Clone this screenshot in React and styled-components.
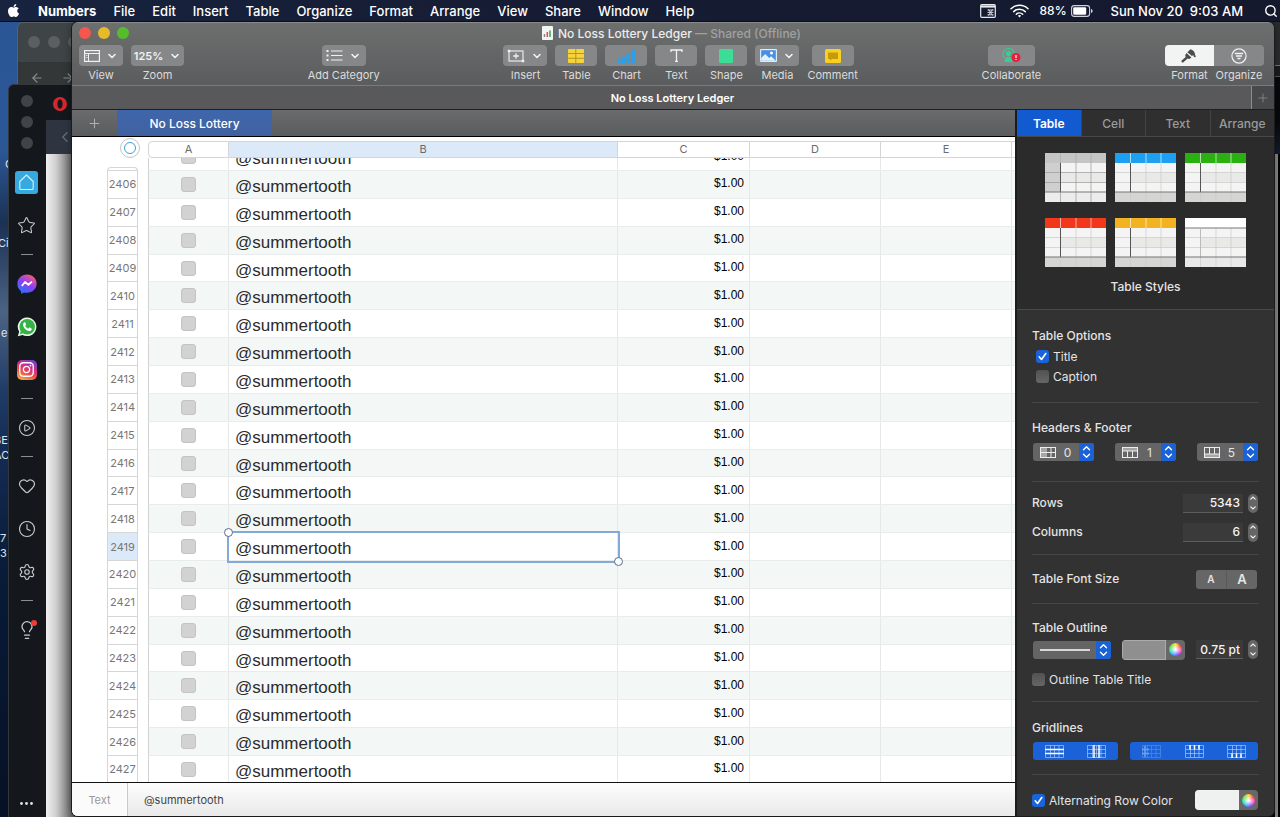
import React, { useState } from "react";
import styled, { createGlobalStyle, css } from "styled-components";
import { FaApple, FaInstagram } from "react-icons/fa";
import {
  ArrowLeft,
  ArrowRight,
  ChevronDown,
  ChevronLeft,
  CirclePlay,
  Clock,
  Heart,
  Lightbulb,
  Plus,
  Search,
  Settings,
  Star,
} from "lucide-react";

const GlobalStyle = createGlobalStyle`
  * {
    box-sizing: border-box;
  }
  body {
    margin: 0;
    overflow: hidden;
    font-family: Inter, "Liberation Sans", sans-serif;
    font-size: 12px;
    color: #e4e4e4;
  }
  button, input, select {
    margin: 0;
    padding: 0;
    border: 0;
    background: none;
    color: inherit;
    font: inherit;
  }
  svg {
    display: block;
    flex: none;
  }
`;

const Screen = styled.div`
  display: flex;
  flex-direction: column;
  height: 100vh;
`;

/* ---------- menu bar ---------- */

const MenuBar = styled.header`
  display: flex;
  justify-content: space-between;
  align-items: center;
  height: 22px;
  flex: none;
  padding: 0 2px 0 6px;
  background: linear-gradient(90deg, #17233f, #161c33 40%, #14192e);
  border-bottom: 1px solid #0a0d16;
  color: #fff;
  font-size: 13px;
  font-weight: 500;
  white-space: nowrap;
`;

const MenuList = styled.nav`
  display: flex;
  align-items: center;
  gap: 17px;
`;

const MenuItem = styled.button`
  font-weight: ${({ $bold }) => ($bold ? 700 : 500)};
`;

const StatusList = styled.div`
  display: flex;
  align-items: center;
`;

const StatusItem = styled.div`
  display: flex;
  align-items: center;
  gap: 4px;
  margin-left: ${({ $gap }) => $gap}px;
  font-size: ${({ $small }) => ($small ? 12 : 13)}px;
`;

/* ---------- desktop and the windows behind ---------- */

const Desktop = styled.div`
  position: relative;
  flex: 1;
  overflow: hidden;
  background: linear-gradient(
    180deg,
    #2a5695 0,
    #2b5795 130px,
    #1b3154 200px,
    #4b6384 290px,
    #1f3b66 370px,
    #142b52 430px,
    #081a36 560px,
    #071125 100%
  );
`;

const FileLabel = styled.span`
  position: absolute;
  left: ${({ $x }) => $x}px;
  top: ${({ $y }) => $y}px;
  color: #dfe5ee;
  font-size: 11px;
  line-height: 14px;
`;

const RightEdge = styled.div`
  position: absolute;
  top: 0;
  right: 0;
  bottom: 0;
  width: 20px;
  background: linear-gradient(#2a2c2e 0 43px, #77797b 43px 44px, #1b1c1e 44px 54px, #55585b 54px 55px, #07090d 55px 100px, #101d33 132px, #020203 132px);

  &::after {
    content: "";
    position: absolute;
    top: 132px;
    right: 2px;
    bottom: 0;
    width: 3px;
    background: #858585;
  }
`;

const BackWindow = styled.div`
  position: absolute;
  left: 17px;
  top: 0;
  width: 300px;
  height: 200px;
  border: 1px solid #5b6062;
  border-radius: 6px 6px 0 0;
  background: linear-gradient(#3f4446 0 39px, #333738 39px);
  color: #8a8d8e;
`;

const BackDots = styled.div`
  display: flex;
  gap: 8px;
  padding: 13px 10px;
`;

const BackNav = styled.div`
  display: flex;
  gap: 17px;
  padding: 10px 12px;
`;

const GreyDot = styled.i`
  width: 12px;
  height: 12px;
  border-radius: 50%;
  background: ${({ $dark }) => ($dark ? "#404347" : "#5b5f61")};
`;

const OperaWindow = styled.div`
  position: absolute;
  left: 8px;
  top: 62px;
  bottom: 0;
  width: 300px;
  display: flex;
  border: 1px solid #33383c;
  border-bottom: 0;
  border-radius: 6px 0 0 0;
  background: #14181c;
  overflow: hidden;
`;

const OperaSidebar = styled.nav`
  display: flex;
  flex-direction: column;
  align-items: center;
  width: 37px;
  padding: 6px 2px 5px 0;
  color: #c9ccd0;
`;

const SideDots = styled.div`
  display: flex;
  flex-direction: column;
  gap: 9px;
  padding: 4px 0 12px;
`;

const SideButton = styled.button`
  position: relative;
  display: flex;
  align-items: center;
  justify-content: center;
  width: 35px;
  height: ${({ $last }) => ($last ? 18 : 43)}px;
  margin-top: ${({ $last }) => ($last ? "auto" : 0)};
`;

const SideRule = styled.i`
  width: 12px;
  height: 1px;
  margin: 7px 0;
  background: #8b8f94;
`;

const HomeTile = styled.span`
  display: flex;
  align-items: center;
  justify-content: center;
  width: 23px;
  height: 23px;
  border-radius: 3px;
  background: #37a9e1;
`;

const InstaTile = styled.span`
  display: flex;
  align-items: center;
  justify-content: center;
  width: 20px;
  height: 20px;
  border-radius: 5px;
  color: #fff;
  background: linear-gradient(25deg, #f9b343 5%, #ee4a4e 40%, #c72d93 65%, #5b4ad8 100%);
`;

const Notice = styled.i`
  position: absolute;
  top: 12px;
  right: 7px;
  width: 6px;
  height: 6px;
  border-radius: 50%;
  background: #f03a36;
`;

const OperaMain = styled.div`
  display: flex;
  flex-direction: column;
  flex: 1;
`;

const OperaTabs = styled.div`
  height: 35px;
  padding: 12px 7px;
`;

const OperaBar = styled.div`
  height: 34px;
  padding: 8px 10px;
  background: #2e3541;
  color: #69717d;
`;

const OperaPage = styled.div`
  flex: 1;
  background: linear-gradient(90deg, #f0f0f0 0, #cfcfcf 10px, #8d8d8d 20px, #5c5c5c 27px);
`;

/* ---------- Numbers window ---------- */

const Window = styled.main`
  position: absolute;
  left: 72px;
  right: 6px;
  top: 0;
  bottom: 1px;
  display: flex;
  flex-direction: column;
  border-radius: 6px;
  overflow: hidden;
  background: #323232;
  box-shadow: 0 0 0 1px #1b1b1b, 0 0 10px rgba(0, 0, 0, 0.4);
`;

const Chrome = styled.div`
  flex: none;
  height: 64px;
  padding: 0 10px 0 7px;
  background: linear-gradient(#6d6f6f, #5b5c5d);
  border-top: 1px solid #8a8b8b;
  border-bottom: 1px solid #7a7b7b;
`;

const TitleBar = styled.div`
  display: grid;
  grid-template-columns: 1fr auto 1fr;
  align-items: center;
  height: 20px;
`;

const Lights = styled.div`
  display: flex;
  gap: 7px;
`;

const Light = styled.button`
  width: 12px;
  height: 12px;
  border-radius: 50%;
  background: ${({ $color }) => $color};
`;

const Title = styled.h1`
  display: flex;
  align-items: center;
  gap: 5px;
  margin: 0;
  font-size: 12px;
  font-weight: 500;
  color: #ececec;

  span {
    color: #a0a1a1;
  }
`;

const Toolbar = styled.div`
  display: flex;
  justify-content: space-between;
  padding-top: 2px;
`;

const ToolGroup = styled.div`
  display: flex;
  gap: ${({ $gap }) => $gap || 0}px;
`;

const ToolItem = styled.div`
  display: flex;
  flex-direction: column;
  align-items: center;
  min-width: ${({ $width }) => $width}px;
`;

const ToolButton = styled.button`
  display: flex;
  align-items: center;
  justify-content: center;
  gap: 6px;
  width: ${({ $width }) => $width}px;
  height: 21px;
  border-radius: ${({ $side }) =>
    $side === "left" ? "4px 0 0 4px" : $side === "right" ? "0 4px 4px 0" : "4px"};
  background: ${({ $active }) => ($active ? "#f2f3f3" : "#868788")};
  color: ${({ $active }) => ($active ? "#4a4a4a" : "#f2f2f2")};
  font-size: 11px;
  font-weight: 600;
`;

const ToolLabel = styled.span`
  margin-top: 2px;
  font-size: 11px;
  line-height: 14px;
  color: #dcdcdc;
  white-space: nowrap;
`;

const DocTabs = styled.div`
  display: flex;
  flex: none;
  height: 24px;
  background: #59595b;
  border-bottom: 1px solid #1e1e1e;
`;

const DocTab = styled.button`
  flex: 1;
  padding-left: 22px;
  border-right: 1px solid #8d8d8d;
  color: #fff;
  font-size: 11px;
  font-weight: 600;
`;

const AddTab = styled.button`
  display: flex;
  align-items: center;
  justify-content: center;
  width: ${({ $width }) => $width}px;
  color: ${({ $dim }) => ($dim ? "#858585" : "#b5b5b5")};
  background: ${({ $dim }) => ($dim ? "#48494a" : "transparent")};
`;

const Workspace = styled.div`
  display: flex;
  flex: 1;
  min-height: 0;
`;

const Document = styled.section`
  display: flex;
  flex-direction: column;
  flex: 1;
  min-width: 0;
  border-right: 2px solid #1c1c1c;
  background: #fff;
`;

const SheetTabs = styled.div`
  display: flex;
  flex: none;
  height: 27px;
  background: linear-gradient(#6a6b6c, #5b5c5d);
  border-bottom: 1px solid #000;
`;

const SheetTab = styled.button`
  width: 155px;
  background: linear-gradient(#3f66ab, #4061a0);
  color: #fff;
  font-weight: 500;
`;

/* ---------- spreadsheet ---------- */

const Canvas = styled.div`
  display: flex;
  flex: 1;
  min-height: 0;
  padding-left: 35px;
  overflow: hidden;
`;

const Sheet = styled.table`
  display: flex;
  flex-direction: column;
  flex: 1;
  margin-bottom: -2px;
  color: #111;
`;

const rowColumns = css`
  display: grid;
  grid-template-columns: 31px 10px 81px 389px 132px 131px 131px 1fr;
`;

const SheetHead = styled.thead`
  display: block;
`;

const HeadRow = styled.tr`
  ${rowColumns}
  position: relative;
  z-index: 1;
  height: 21px;
  background: #fff;
`;

const ColHead = styled.th`
  height: 17px;
  margin-top: 4px;
  padding: 0;
  border: solid #d5d5d5;
  border-width: 1px 1px 1px ${({ $first }) => ($first ? 1 : 0)}px;
  border-radius: ${({ $first }) => ($first ? "4px 0 0 4px" : 0)};
  background: ${({ $on }) => ($on ? "#dce9f9" : "#fff")};
  color: #6b6b6b;
  font-size: 11px;
  font-weight: 400;
  line-height: 15px;
`;

const Corner = styled.td`
  display: flex;
  justify-content: flex-end;
  align-items: flex-end;
  padding: 0;
`;

const TableHandle = styled.button`
  display: flex;
  align-items: center;
  justify-content: center;
  width: 20px;
  height: 20px;
  margin-right: -2px;
  flex: none;
  border: 1px solid #c4c4c4;
  border-radius: 50%;

  &::after {
    content: "";
    width: 10px;
    height: 10px;
    border: 1px solid #3aa3d8;
    border-radius: 50%;
  }
`;

const SheetBody = styled.tbody`
  display: flex;
  flex-direction: column;
  flex: 1;
  min-height: 0;
`;

/* the first row is scrolled half under the column heads */
const Row = styled.tr`
  ${rowColumns}
  grid-template-rows: ${({ $cut }) => ($cut ? "13px" : "auto")};
  flex: ${({ $cut }) => ($cut ? "0 0 13px" : "1 1 0")};
  min-height: 0;
  overflow: ${({ $cut }) => ($cut ? "hidden" : "visible")};
`;

const RowHead = styled.th`
  align-self: ${({ $cut }) => ($cut ? "end" : "stretch")};
  display: flex;
  align-items: center;
  justify-content: center;
  height: ${({ $cut }) => ($cut ? "4px" : "auto")};
  padding: 0;
  border: solid #d6d6d6;
  border-width: ${({ $cut }) => ($cut ? 1 : 0)}px 1px 1px;
  border-radius: ${({ $cut }) => ($cut ? "4px 4px 0 0" : 0)};
  background: ${({ $on }) => ($on ? "#dce9f9" : "#fff")};
  color: #777;
  font-size: 11px;
  font-weight: 400;
`;

const Gap = styled.td`
  padding: 0;
`;

const Cell = styled.td`
  position: relative;
  align-self: ${({ $cut }) => ($cut ? "end" : "stretch")};
  display: flex;
  align-items: center;
  justify-content: ${({ $align }) => $align || "flex-start"};
  height: ${({ $cut }) => ($cut ? "28px" : "auto")};
  min-height: 0;
  padding: ${({ $first }) => ($first ? "0 6px 0 5px" : "0 5px 0 6px")};
  border-right: 1px solid #e6e9e8;
  border-bottom: 1px solid #e9ecec;
  border-left: ${({ $first }) => ($first ? "1px solid #d2d2d2" : 0)};
  background: ${({ $shade }) => ($shade ? "#f3f7f6" : "#fff")};
`;

const NameText = styled.span`
  padding-top: 5px;
  font: 17px/20px "Liberation Sans", Arial, sans-serif;
  color: #2b2b2b;
`;

const Price = styled.span`
  padding-bottom: 2px;
  font: 12px/14px "Liberation Sans", Arial, sans-serif;
  color: #000;
`;

const CellCheck = styled.input`
  appearance: none;
  width: 15px;
  height: 15px;
  flex: none;
  border: 1px solid #c3c3c3;
  border-radius: 3px;
  background: #d2d2d2;
`;

const Selection = styled.i`
  position: absolute;
  inset: -2px -3px -3px -2px;
  z-index: 1;
  border: 2px solid #83aad6;
  pointer-events: none;

  &::before,
  &::after {
    content: "";
    position: absolute;
    width: 7px;
    height: 7px;
    border: 1px solid #5a6a9a;
    border-radius: 50%;
    background: #fff;
  }
  &::before {
    left: -5px;
    top: -5px;
  }
  &::after {
    right: -5px;
    bottom: -5px;
  }
`;

const FormulaBar = styled.footer`
  display: flex;
  flex: none;
  height: 34px;
  border-top: 1px solid #111;
  background: linear-gradient(#fdfdfd, #e9e9e9);
  color: #444;
  font-size: 11px;
`;

const FormulaType = styled.span`
  display: flex;
  align-items: center;
  justify-content: center;
  width: 56px;
  border-right: 1px solid #c9c9c9;
  background: #fbfbfb;
  color: #999;
`;

const FormulaInput = styled.input`
  flex: 1;
  padding-left: 16px;
`;

/* ---------- inspector ---------- */

const Inspector = styled.aside`
  display: flex;
  flex-direction: column;
  width: 257px;
  flex: none;
  background: #323232;
`;

const InspectorTabs = styled.div`
  display: flex;
  flex: none;
  height: 27px;
  border-bottom: 1px solid #484848;
  background: #2f2f2f;
`;

const InspectorTab = styled.button`
  flex: 1;
  border-right: 1px solid #434343;
  background: ${({ $on }) => ($on ? "#125ad0" : "transparent")};
  color: ${({ $on }) => ($on ? "#fff" : "#9b9b9b")};
  font-weight: ${({ $on }) => ($on ? 600 : 500)};

  &:last-child {
    border-right: 0;
  }
`;

const StylesPanel = styled.div`
  flex: none;
  padding: 16px 28px 12px;
  border-bottom: 1px solid #494949;
  background: #2b2b2b;
  text-align: center;
  line-height: 20px;
  font-weight: 500;
`;

const StyleGrid = styled.div`
  display: grid;
  grid-template-columns: repeat(3, 61px);
  gap: 16px 9px;
  margin-bottom: 10px;
`;

const StyleButton = styled.button`
  height: 49px;
`;

const Section = styled.section`
  flex: none;
  margin: 0 15px;
  padding: ${({ $top }) => $top}px 0 ${({ $bottom }) => $bottom}px;
  border-bottom: ${({ $last }) => ($last ? 0 : "1px solid #474747")};
`;

const Heading = styled.h2`
  margin: 0 0 ${({ $gap }) => $gap || 0}px;
  font-size: 12px;
  font-weight: 500;
  line-height: 20px;
`;

const Line = styled.div`
  display: flex;
  align-items: center;
  justify-content: space-between;
  height: ${({ $height }) => $height || 20}px;
  margin-top: ${({ $gap }) => $gap || 0}px;
  padding: ${({ $inset }) => ($inset ? "0 1px" : "0 1px 0 0")};
`;

const CheckLabel = styled.label`
  display: flex;
  align-items: center;
  gap: 4px;
  height: 20px;
  padding-left: ${({ $indent }) => ($indent ? 4 : 0)}px;
`;

const Check = styled.input`
  appearance: none;
  width: 13px;
  height: 13px;
  border-radius: 3px;
  background: linear-gradient(#525252, #666);

  &:checked {
    background: #1963db
      url("data:image/svg+xml,%3Csvg xmlns='http://www.w3.org/2000/svg' viewBox='0 0 13 13'%3E%3Cpath d='M3.2 6.8l2.3 2.7 4.3-6' fill='none' stroke='white' stroke-width='1.6' stroke-linecap='round' stroke-linejoin='round'/%3E%3C/svg%3E");
  }
`;

const PopupBox = styled.label`
  display: flex;
  align-items: center;
  width: ${({ $width }) => $width}px;
  height: 18px;
  padding-left: 7px;
  border-radius: 3px;
  overflow: hidden;
  background: #656565;
`;

const PopupSelect = styled.select`
  appearance: none;
  flex: 1;
  min-width: 0;
  text-align: center;
  text-align-last: center;
  outline: 0;
`;

const PopupCap = styled.span`
  display: flex;
  align-items: center;
  justify-content: center;
  width: 15px;
  height: 100%;
  flex: none;
  background: #1a62d6;
`;

const FieldGroup = styled.div`
  display: flex;
  align-items: center;
  gap: 5px;
`;

const NumberField = styled.input`
  width: ${({ $width }) => $width}px;
  height: 19px;
  padding-right: 3px;
  border-bottom: 1px solid #5c5c5c;
  background: #3a3a3a;
  color: #f4f4f4;
  font-weight: 500;
  text-align: right;
`;

const StepperBox = styled.div`
  display: flex;
  flex-direction: column;
  width: 10px;
  height: 19px;
  border-radius: 5px;
  background: #666;
`;

const StepButton = styled.button`
  display: flex;
  flex: 1;
  align-items: center;
  justify-content: center;
  min-height: 0;
`;

const SizeButtons = styled.div`
  display: flex;
  width: 61px;
  height: 19px;
  margin-right: 1px;
  border-radius: 3px;
  overflow: hidden;
  background: #666;
`;

const SizeButton = styled.button`
  flex: 1;
  border-right: 1px solid #5a5a5a;
  font-size: ${({ $size }) => $size}px;
  font-weight: 600;

  &:last-child {
    border-right: 0;
  }
`;

const ColorWell = styled.div`
  display: flex;
  width: 63px;
  height: 20px;
  border-radius: 4px;
  overflow: hidden;
  background: #686868;
`;

const Swatch = styled.button`
  flex: 1;
  border: 1px solid rgba(255, 255, 255, 0.25);
  background: ${({ $color }) => $color};
`;

const WheelButton = styled.button`
  display: flex;
  align-items: center;
  justify-content: center;
  width: 19px;

  &::after {
    content: "";
    width: 13px;
    height: 13px;
    border-radius: 50%;
    background: radial-gradient(#fff 5%, rgba(255, 255, 255, 0) 65%),
      conic-gradient(#ffd23c, #ff4a3c, #ff48c8, #8a4cff, #35a8ff, #2fe0b0, #6de23e, #ffd23c);
  }
`;

const GridButtons = styled.div`
  display: flex;
  justify-content: space-around;
  width: ${({ $width }) => $width}px;
  height: 18px;
  border-radius: 3px;
  background: #1b62d8;
`;

const GridButton = styled.button`
  display: flex;
  flex: 1;
  align-items: center;
  justify-content: center;
  opacity: ${({ $dim }) => ($dim ? 0.4 : 1)};
`;

/* ---------- drawings ---------- */

const DownMark = () => <ChevronDown size={12} strokeWidth={3.2} />;

const NotepadIcon = () => (
  <svg width="16" height="14" viewBox="0 0 16 14" fill="none" stroke="#e6e8ee" strokeWidth="1.2">
    <rect x=".7" y=".7" width="14.6" height="12.6" rx="1" />
    <path d="M1 2.500h14" strokeWidth="2.2" />
    <path d="M7.500 6h6M7.500 8.400h6M7.500 10.800h6M8.500 5.500l4 6M12.500 5.500l-4 6" strokeWidth=".9" />
  </svg>
);

const WifiIcon = () => (
  <svg width="19" height="14" viewBox="0 0 19 14" fill="none" stroke="#fff" strokeWidth="1.5" strokeLinecap="round">
    <path d="M1 4.8a12 12 0 0 1 17 0M3.7 7.6a8.2 8.2 0 0 1 11.6 0M6.3 10.2a4.6 4.6 0 0 1 6.4 0" />
    <path d="M9.5 13.4l-1.6-1.7a2.3 2.3 0 0 1 3.2 0z" fill="#fff" stroke="none" />
  </svg>
);

const BatteryIcon = () => (
  <svg width="22" height="12" viewBox="0 0 22 12" fill="none">
    <rect x=".6" y=".6" width="18" height="10.8" rx="2.6" stroke="#cfd2da" strokeWidth="1.1" />
    <rect x="2.2" y="2.2" width="13" height="7.6" rx="1.2" fill="#fff" />
    <path d="M20 4v4c1-.3 1.6-1.100 1.600-2s-.6-1.700-1.600-2z" fill="#cfd2da" />
  </svg>
);

const OperaLogo = () => (
  <svg width="14" height="14" viewBox="0 0 14 14">
    <path
      fillRule="evenodd"
      fill="#d8272c"
      d="M7 0a7 7 0 1 1 0 14A7 7 0 0 1 7 0zm0 2.300C5.200 2.300 4.400 4.600 4.400 7s.8 4.700 2.600 4.700S9.600 9.400 9.600 7 8.800 2.300 7 2.300z"
    />
  </svg>
);

const HomeIcon = () => (
  <svg width="17" height="17" viewBox="0 0 17 17" fill="none" stroke="#d6f0fc" strokeWidth="1.1" strokeLinejoin="round">
    <path d="M1.800 7.500L8.500 1l6.700 6.500v6.700c0 .8-.5 1.300-1.300 1.300H3.100c-.8 0-1.300-.5-1.300-1.300z" />
  </svg>
);

const MessengerIcon = () => (
  <svg width="20" height="20" viewBox="0 0 20 20">
    <defs>
      <linearGradient id="messenger" x1=".2" y1="1" x2=".8" y2="0">
        <stop offset="0" stopColor="#1b7bff" />
        <stop offset=".5" stopColor="#8b3ff5" />
        <stop offset="1" stopColor="#ff5d74" />
      </linearGradient>
    </defs>
    <path fill="url(#messenger)" d="M10 .4c5.500 0 9.600 4 9.600 9.200s-4.100 9.200-9.600 9.200c-1 0-1.900-.1-2.800-.4l-3 1.400-.2-2.600A9 9 0 0 1 .4 9.600C.4 4.400 4.500.4 10 .4z" />
    <path d="M4.800 12l3.200-4 3.400 2.800L15 7.600" fill="none" stroke="#fff" strokeWidth="1.900" strokeLinejoin="round" />
  </svg>
);

const WhatsappIcon = () => (
  <svg width="20" height="20" viewBox="0 0 20 20">
    <path fill="#eafbe9" d="M10.200.5a9.300 9.300 0 1 1-4.700 17.400L.8 19.300l1.400-4.600A9.300 9.300 0 0 1 10.200.5z" />
    <circle cx="10.200" cy="9.800" r="7.800" fill="#36b347" />
    <path d="M2.800 17.300l1-3.600 2.600 2.600z" fill="#36b347" />
    <path
      fill="#fff"
      d="M7.100 5.600c.4-.4 1-.3 1.200.2l.7 1.500c.1.300 0 .6-.2.800l-.6.7c.7 1.400 1.700 2.300 3.100 2.900l.8-.9c.2-.3.500-.3.800-.2l1.500.8c.4.2.5.600.3 1.100-.4 1.200-1.600 1.700-2.900 1.400-2.900-.7-5.100-2.800-5.700-5.400-.2-1.200.2-2.200 1-2.900z"
    />
  </svg>
);

const DocIcon = () => (
  <svg width="11" height="14" viewBox="0 0 11 14">
    <rect width="11" height="14" rx="1" fill="#f4f4f4" />
    <path d="M2.500 11V8" stroke="#8a8a8a" strokeWidth="1.500" />
    <path d="M5.300 11V6" stroke="#d9534a" strokeWidth="1.500" />
    <path d="M8 11V4.500" stroke="#3f9e63" strokeWidth="1.500" />
  </svg>
);

const ViewIcon = () => (
  <svg width="16" height="12" viewBox="0 0 16 12" fill="none" stroke="#f2f2f2">
    <rect x=".6" y=".6" width="14.800" height="10.800" strokeWidth="1.200" />
    <path d="M.6 3.500h14.800M4.500 3.500v8" />
    <path d="M2 5.500h1.500M2 7.500h1.500" strokeWidth=".8" />
  </svg>
);

const CategoryIcon = () => (
  <svg width="17" height="13" viewBox="0 0 17 13" stroke="#f2f2f2">
    <path d="M5 2h11.500M5 6.500h11.500M5 11h11.500" strokeWidth="1.200" />
    <path d="M.500 2h2M.500 6.500h2M.500 11h2" strokeWidth="2" />
  </svg>
);

const InsertIcon = () => (
  <svg width="18" height="14" viewBox="0 0 18 14" fill="none" stroke="#f2f2f2">
    <rect x="2" y="2" width="14" height="10" strokeWidth="1.100" />
    <path d="M9 4.200v5.600M6.200 7h5.600" strokeWidth="1.300" />
    <path d="M.8.800h2.400v2.400H.8zM14.800 10.800h2.400v2.400h-2.400z" fill="#f2f2f2" stroke="none" />
  </svg>
);

const TableIcon = () => (
  <svg width="16" height="14" viewBox="0 0 16 14">
    <rect width="16" height="14" rx="1" fill="#f7d33a" />
    <path d="M0 4.500h16M0 9.300h16M7.800 0v14" stroke="#a98f2c" strokeWidth=".9" />
  </svg>
);

const ChartIcon = () => (
  <svg width="18" height="14" viewBox="0 0 18 14" fill="#2b9fe8">
    <rect x="0" y="9.500" width="3.800" height="4.500" rx="1" />
    <rect x="4.700" y="7.500" width="3.800" height="6.500" rx="1" />
    <rect x="9.400" y="4" width="3.800" height="10" rx="1" />
    <rect x="14.100" y="0" width="3.800" height="14" rx="1" />
  </svg>
);

const TextIcon = () => (
  <svg width="13" height="13" viewBox="0 0 13 13" fill="none" stroke="#f2f2f2" strokeWidth="1.300">
    <path d="M1 3V1h11v2M6.500 1v11M5 12.300h3" />
  </svg>
);

const ShapeIcon = () => (
  <svg width="14" height="14" viewBox="0 0 14 14">
    <rect width="14" height="14" rx="1" fill="#3ddc97" />
  </svg>
);

const MediaIcon = () => (
  <svg width="17" height="13" viewBox="0 0 17 13">
    <rect width="17" height="13" rx="1" fill="#dcebfa" />
    <rect x="1.200" y="1.200" width="14.600" height="10.600" fill="#4a8fe2" />
    <path d="M1.200 11.800V9l4-4 4 4 2-1.800 4.600 4.600z" fill="#e6f1fc" />
    <circle cx="11.500" cy="4" r="1.500" fill="#fff" />
  </svg>
);

const CommentIcon = () => (
  <svg width="16" height="14" viewBox="0 0 16 14">
    <rect width="16" height="14" rx="1.500" fill="#f8d021" />
    <path d="M3 3.500h10v6.500H7l-2 1.500V10H3z" fill="#c79a0c" />
  </svg>
);

const CollaborateIcon = () => (
  <svg width="20" height="15" viewBox="0 0 20 15">
    <path d="M3.200 10a5.800 5.800 0 1 1 9 0" fill="none" stroke="#35cf94" strokeWidth="1.100" />
    <circle cx="7.500" cy="5.500" r="2.600" fill="#35cf94" />
    <path d="M3.500 14c0-3 1.500-5.200 4-5.200s4 2.200 4 5.200z" fill="#35cf94" />
    <circle cx="15" cy="9.500" r="4.500" fill="#e6203f" />
    <path d="M15 7v3M15 11v1" stroke="#fff" strokeWidth="1.200" />
  </svg>
);

const BrushIcon = () => (
  <svg width="16" height="14" viewBox="0 0 16 14" fill="#4b4b4b">
    <path d="M6.300 3.200L9.500.2c1.600.2 3.700 1.800 4 3.300l1.400 4.700-2-.3-.6-2-1.300 1.100z" />
    <path d="M5.500 4.100l4.900 4.300-1.200 1.200c-.8.500-1.900.4-2.600 0L2.400 13.300c-1 .8-2.500-.6-1.700-1.700l4-3.500c-.5-.8-.6-1.900-.1-2.700z" />
  </svg>
);

const OrganizeIcon = () => (
  <svg width="16" height="16" viewBox="0 0 16 16" fill="none" stroke="#f2f2f2">
    <circle cx="8" cy="8" r="7.100" strokeWidth="1.200" />
    <path d="M3.800 5.500h8.400M5 8h6M6.500 10.500h3" strokeWidth="1.300" />
  </svg>
);

const UpDown = () => (
  <svg width="9" height="14" viewBox="0 0 9 14" fill="none" stroke="#fff" strokeWidth="1.400" strokeLinecap="round" strokeLinejoin="round">
    <path d="M1.500 4.800l3-3 3 3M1.500 9.200l3 3 3-3" />
  </svg>
);

const StepMark = ({ down }) => (
  <svg width="6" height="4" viewBox="0 0 6 4" fill="none" stroke="#f2f2f2" strokeWidth="1.200" strokeLinecap="round">
    <path d={down ? "M.8.8L3 3 5.200.8" : "M.8 3.200L3 1l2.200 2.200"} />
  </svg>
);

const headerPaths = {
  column: { lines: "M.5 5.500h15M6 .5v10M11 .5v10", fill: "M0 0h5v11H0z" },
  row: { lines: "M.5 4h15M5.500 4v7M10.500 4v7", fill: "M0 0h16v4H0z" },
  footer: { lines: "M.5 7h15M5.500 0v7M10.500 0v7", fill: "M0 7h16v4H0z" },
};

const HeaderIcon = ({ kind }) => (
  <svg width="16" height="11" viewBox="0 0 16 11" fill="none" stroke="#ededed">
    <path d={headerPaths[kind].fill} fill="#a5a5a5" stroke="none" />
    <path d={headerPaths[kind].lines} />
    <rect x=".5" y=".5" width="15" height="10" />
  </svg>
);

const gridPaths = {
  horizontal: "M0 4.500h19M0 8.500h19",
  vertical: "M7 0v13M12 0v13",
  headerColumn: "M0 4.500h7M0 8.500h7M3 1v11",
  headerRow: "M5 0v4.500M9.500 0v4.500M14 0v4.500",
  footer: "M5 8.500V13M9.500 8.500V13M14 8.500V13",
};

const GridIcon = ({ kind }) => (
  <svg width="19" height="13" viewBox="0 0 19 13" fill="none" stroke="#a9c8f5">
    <path d="M.5.5h18v12H.5zM.5 4.500h18M.5 8.500h18M5.500.5v12M9.500.5v12M14 .5v12" strokeWidth=".7" />
    <path d={gridPaths[kind]} stroke="#fff" strokeWidth="1.500" />
  </svg>
);

function StyleThumb({ head, side, foot, dark }) {
  return (
    <svg width="61" height="49" viewBox="0 0 61 49">
      <rect width="61" height="49" fill="#f4f4f4" />
      <path d="M16 19.500h45v10H16z" fill="#e9e9e7" />
      <path d="M0 39h61v10H0z" fill={foot} />
      {side && <path d="M0 10h15.500v29H0z" fill="#cfcfcf" />}
      <path d="M0 19.500h61M0 29.500h61M31 10v39M46 10v39M15.500 39v10" stroke={dark ? "#999" : "#cacaca"} strokeWidth=".7" />
      <rect width="61" height="10" fill={head} />
      <path d="M15.500 0v10M31 0v10M46 0v10" stroke={dark ? "#a5a7a6" : "#fff"} strokeOpacity=".7" strokeWidth=".9" />
      {head === "#ffffff" && <path d="M0 10h61" stroke="#777" />}
      <path d="M15.500 10v29" stroke={head === "#ffffff" ? "#bbb" : "#555"} />
      <path d="M0 39h61" stroke="#777" />
    </svg>
  );
}

/* ---------- data ---------- */

const menus = ["Numbers", "File", "Edit", "Insert", "Table", "Organize", "Format", "Arrange", "View", "Share", "Window", "Help"];

const insertTools = [
  { label: "Insert", icon: <InsertIcon />, menu: true },
  { label: "Table", icon: <TableIcon /> },
  { label: "Chart", icon: <ChartIcon /> },
  { label: "Text", icon: <TextIcon /> },
  { label: "Shape", icon: <ShapeIcon /> },
  { label: "Media", icon: <MediaIcon />, menu: true },
  { label: "Comment", icon: <CommentIcon /> },
];

const columns = ["A", "B", "C", "D", "E", ""];
const rows = Array.from({ length: 23 }, (_, i) => 2405 + i);
const selectedRow = 2419;

const tableStyles = [
  { name: "Grey", head: "#c4c6c5", foot: "#ececec", side: true, dark: true },
  { name: "Blue", head: "#1d9ff2", foot: "#d5d5d3" },
  { name: "Green", head: "#2bb012", foot: "#d5d5d3" },
  { name: "Red", head: "#f2371b", foot: "#d5d5d3" },
  { name: "Yellow", head: "#f3b320", foot: "#d5d5d3" },
  { name: "Plain", head: "#ffffff", foot: "#e8e8e8" },
];

const fileLabels = [
  { text: "C", x: 5, y: 135 },
  { text: "Ci", x: -2, y: 214 },
  { text: "e", x: 1, y: 304 },
  { text: "BE", x: -6, y: 411 },
  { text: "AC", x: -6, y: 426 },
  { text: "7", x: 0, y: 509 },
  { text: "3", x: 0, y: 524 },
];

/* ---------- parts ---------- */

function Tool({ label, icon, menu, width }) {
  const size = width || (menu ? 44 : 42);
  return (
    <ToolItem $width={size}>
      <ToolButton $width={size} aria-label={label}>
        {icon}
        {menu && <DownMark />}
      </ToolButton>
      <ToolLabel>{label}</ToolLabel>
    </ToolItem>
  );
}

function Stepper({ name }) {
  return (
    <StepperBox>
      <StepButton aria-label={`Increase ${name}`}>
        <StepMark />
      </StepButton>
      <StepButton aria-label={`Decrease ${name}`}>
        <StepMark down />
      </StepButton>
    </StepperBox>
  );
}

function HeaderPopup({ kind, value }) {
  return (
    <PopupBox $width={61}>
      <HeaderIcon kind={kind} />
      <PopupSelect aria-label={`Header ${kind}`} defaultValue={value}>
        <option>{value}</option>
      </PopupSelect>
      <PopupCap>
        <UpDown />
      </PopupCap>
    </PopupBox>
  );
}

function CheckOption({ label, indent, defaultChecked }) {
  return (
    <CheckLabel $indent={indent}>
      <Check type="checkbox" defaultChecked={defaultChecked} />
      {label}
    </CheckLabel>
  );
}

function Sidebar() {
  return (
    <OperaSidebar>
      <SideDots>
        <GreyDot $dark />
        <GreyDot $dark />
        <GreyDot $dark />
      </SideDots>
      <SideButton aria-label="Home">
        <HomeTile>
          <HomeIcon />
        </HomeTile>
      </SideButton>
      <SideButton aria-label="Bookmarks">
        <Star size={19} strokeWidth={1.3} />
      </SideButton>
      <SideRule />
      <SideButton aria-label="Messenger">
        <MessengerIcon />
      </SideButton>
      <SideButton aria-label="WhatsApp">
        <WhatsappIcon />
      </SideButton>
      <SideButton aria-label="Instagram">
        <InstaTile>
          <FaInstagram size={17} />
        </InstaTile>
      </SideButton>
      <SideRule />
      <SideButton aria-label="Player">
        <CirclePlay size={18} strokeWidth={1.4} />
      </SideButton>
      <SideRule />
      <SideButton aria-label="Favourites">
        <Heart size={18} strokeWidth={1.5} />
      </SideButton>
      <SideButton aria-label="History">
        <Clock size={18} strokeWidth={1.5} />
      </SideButton>
      <SideButton aria-label="Settings">
        <Settings size={18} strokeWidth={1.5} />
      </SideButton>
      <SideRule />
      <SideButton aria-label="Tips">
        <Lightbulb size={20} strokeWidth={1.5} />
        <Notice />
      </SideButton>
      <SideButton $last aria-label="More">
        <svg width="13" height="3" viewBox="0 0 13 3" fill="#e2e4e6">
          <circle cx="1.500" cy="1.500" r="1.400" />
          <circle cx="6.500" cy="1.500" r="1.400" />
          <circle cx="11.500" cy="1.500" r="1.400" />
        </svg>
      </SideButton>
    </OperaSidebar>
  );
}

function SheetRow({ number }) {
  const cut = number === rows[0];
  const shade = number % 2 === 0;
  const on = number === selectedRow;
  return (
    <Row $cut={cut}>
      <RowHead scope="row" $cut={cut} $on={on}>
        {cut ? "" : number}
      </RowHead>
      <Gap />
      <Cell $first $cut={cut} $shade={shade} $align="center">
        <CellCheck type="checkbox" aria-label={`A${number}`} />
      </Cell>
      <Cell $cut={cut} $shade={shade}>
        <NameText>@summertooth</NameText>
        {on && <Selection />}
      </Cell>
      <Cell $cut={cut} $shade={shade} $align="flex-end">
        <Price>$1.00</Price>
      </Cell>
      <Cell $shade={shade} />
      <Cell $shade={shade} />
      <Cell $shade={shade} />
    </Row>
  );
}

function FormatPanel() {
  const [tab, setTab] = useState("Table");
  return (
    <Inspector>
      <InspectorTabs>
        {["Table", "Cell", "Text", "Arrange"].map((name) => (
          <InspectorTab key={name} $on={name === tab} onClick={() => setTab(name)}>
            {name}
          </InspectorTab>
        ))}
      </InspectorTabs>
      <StylesPanel>
        <StyleGrid>
          {tableStyles.map(({ name, ...style }) => (
            <StyleButton key={name} aria-label={name}>
              <StyleThumb {...style} />
            </StyleButton>
          ))}
        </StyleGrid>
        Table Styles
      </StylesPanel>
      <Section $top={16} $bottom={16}>
        <Heading>Table Options</Heading>
        <CheckOption label="Title" indent defaultChecked />
        <CheckOption label="Caption" indent />
      </Section>
      <Section $top={15} $bottom={20}>
        <Heading $gap={5}>Headers &amp; Footer</Heading>
        <Line $height={18} $inset>
          <HeaderPopup kind="column" value="0" />
          <HeaderPopup kind="row" value="1" />
          <HeaderPopup kind="footer" value="5" />
        </Line>
      </Section>
      <Section $top={11} $bottom={12}>
        <Line>
          <Heading as="label" htmlFor="rows">Rows</Heading>
          <FieldGroup>
            <NumberField id="rows" $width={60} defaultValue="5343" />
            <Stepper name="rows" />
          </FieldGroup>
        </Line>
        <Line $gap={9}>
          <Heading as="label" htmlFor="columns">Columns</Heading>
          <FieldGroup>
            <NumberField id="columns" $width={60} defaultValue="6" />
            <Stepper name="columns" />
          </FieldGroup>
        </Line>
      </Section>
      <Section $top={14} $bottom={14}>
        <Line>
          <Heading>Table Font Size</Heading>
          <SizeButtons>
            <SizeButton $size={10}>A</SizeButton>
            <SizeButton $size={13}>A</SizeButton>
          </SizeButtons>
        </Line>
      </Section>
      <Section $top={14} $bottom={12}>
        <Heading>Table Outline</Heading>
        <Line $inset $gap={2} $height={19}>
          <PopupBox $width={78}>
            <svg width="50" height="2" viewBox="0 0 50 2">
              <path d="M0 1h50" stroke="#d8d8d8" strokeWidth="2" />
            </svg>
            <PopupSelect aria-label="Outline style">
              <option label=" " value="solid" />
            </PopupSelect>
            <PopupCap>
              <UpDown />
            </PopupCap>
          </PopupBox>
          <ColorWell>
            <Swatch $color="#8f8f8f" aria-label="Outline color" />
            <WheelButton aria-label="Outline color wheel" />
          </ColorWell>
          <FieldGroup>
            <NumberField aria-label="Outline width" $width={47} defaultValue="0.75 pt" />
            <Stepper name="outline width" />
          </FieldGroup>
        </Line>
        <Line $gap={10}>
          <CheckOption label="Outline Table Title" />
        </Line>
      </Section>
      <Section $top={16} $bottom={14}>
        <Heading $gap={4}>Gridlines</Heading>
        <Line $height={18} $inset>
          <GridButtons $width={85}>
            <GridButton aria-label="Horizontal lines"><GridIcon kind="horizontal" /></GridButton>
            <GridButton aria-label="Vertical lines"><GridIcon kind="vertical" /></GridButton>
          </GridButtons>
          <GridButtons $width={128}>
            <GridButton $dim aria-label="Header column lines"><GridIcon kind="headerColumn" /></GridButton>
            <GridButton aria-label="Header row lines"><GridIcon kind="headerRow" /></GridButton>
            <GridButton aria-label="Footer lines"><GridIcon kind="footer" /></GridButton>
          </GridButtons>
        </Line>
      </Section>
      <Section $top={15} $bottom={5} $last>
        <Line>
          <CheckOption label="Alternating Row Color" defaultChecked />
          <ColorWell>
            <Swatch $color="#eef1f0" aria-label="Row color" />
            <WheelButton aria-label="Row color wheel" />
          </ColorWell>
        </Line>
      </Section>
    </Inspector>
  );
}

function App() {
  return (
    <Screen>
      <GlobalStyle />
      <MenuBar>
        <MenuList>
          <FaApple size={15} />
          {menus.map((name, i) => (
            <MenuItem key={name} $bold={i === 0}>{name}</MenuItem>
          ))}
        </MenuList>
        <StatusList>
          <StatusItem><NotepadIcon /></StatusItem>
          <StatusItem $gap={14}><WifiIcon /></StatusItem>
          <StatusItem $gap={11} $small>88% <BatteryIcon /></StatusItem>
          <StatusItem $gap={18}>Sun Nov 20&nbsp; 9:03 AM</StatusItem>
          <StatusItem $gap={21}><Search size={14} strokeWidth={2.4} /></StatusItem>
        </StatusList>
      </MenuBar>
      <Desktop>
        {fileLabels.map(({ text, x, y }) => (
          <FileLabel key={text} $x={x} $y={y}>{text}</FileLabel>
        ))}
        <RightEdge />
        <BackWindow>
          <BackDots>
            <GreyDot />
            <GreyDot />
            <GreyDot />
          </BackDots>
          <BackNav>
            <ArrowLeft size={14} />
            <ArrowRight size={14} />
          </BackNav>
        </BackWindow>
        <OperaWindow>
          <Sidebar />
          <OperaMain>
            <OperaTabs><OperaLogo /></OperaTabs>
            <OperaBar><ChevronLeft size={18} strokeWidth={1.5} /></OperaBar>
            <OperaPage />
          </OperaMain>
        </OperaWindow>
        <Window>
          <Chrome>
            <TitleBar>
              <Lights>
                <Light $color="#f5564e" aria-label="Close" />
                <Light $color="#e7bb28" aria-label="Minimize" />
                <Light $color="#55bd2b" aria-label="Full screen" />
              </Lights>
              <Title>
                <DocIcon />
                <div>No Loss Lottery Ledger <span>— Shared (Offline)</span></div>
              </Title>
            </TitleBar>
            <Toolbar>
              <ToolGroup $gap={8}>
                <Tool label="View" icon={<ViewIcon />} menu />
                <Tool label="Zoom" icon="125%" menu width={53} />
              </ToolGroup>
              <Tool label="Add Category" icon={<CategoryIcon />} menu />
              <ToolGroup $gap={8}>
                {insertTools.map((tool) => (
                  <Tool key={tool.label} {...tool} />
                ))}
              </ToolGroup>
              <Tool label="Collaborate" icon={<CollaborateIcon />} width={47} />
              <ToolGroup>
                <ToolItem $width={49}>
                  <ToolButton $width={49} $side="left" $active aria-label="Format"><BrushIcon /></ToolButton>
                  <ToolLabel>Format</ToolLabel>
                </ToolItem>
                <ToolItem $width={50}>
                  <ToolButton $width={50} $side="right" aria-label="Organize"><OrganizeIcon /></ToolButton>
                  <ToolLabel>Organize</ToolLabel>
                </ToolItem>
              </ToolGroup>
            </Toolbar>
          </Chrome>
          <DocTabs>
            <DocTab>No Loss Lottery Ledger</DocTab>
            <AddTab $width={22} $dim aria-label="New tab"><Plus size={14} strokeWidth={1.5} /></AddTab>
          </DocTabs>
          <Workspace>
            <Document>
              <SheetTabs>
                <AddTab $width={45} aria-label="New sheet"><Plus size={15} strokeWidth={1.5} /></AddTab>
                <SheetTab>No Loss Lottery</SheetTab>
              </SheetTabs>
              <Canvas>
                <Sheet>
                  <SheetHead>
                    <HeadRow>
                      <Corner>
                        <TableHandle aria-label="Select table" />
                      </Corner>
                      <Gap />
                      {columns.map((name, i) => (
                        <ColHead key={i} scope="col" $first={i === 0} $on={name === "B"}>{name}</ColHead>
                      ))}
                    </HeadRow>
                  </SheetHead>
                  <SheetBody>
                    {rows.map((number) => (
                      <SheetRow key={number} number={number} />
                    ))}
                  </SheetBody>
                </Sheet>
              </Canvas>
              <FormulaBar>
                <FormulaType>Text</FormulaType>
                <FormulaInput aria-label="Cell value" defaultValue="@summertooth" />
              </FormulaBar>
            </Document>
            <FormatPanel />
          </Workspace>
        </Window>
      </Desktop>
    </Screen>
  );
}

export default App;
